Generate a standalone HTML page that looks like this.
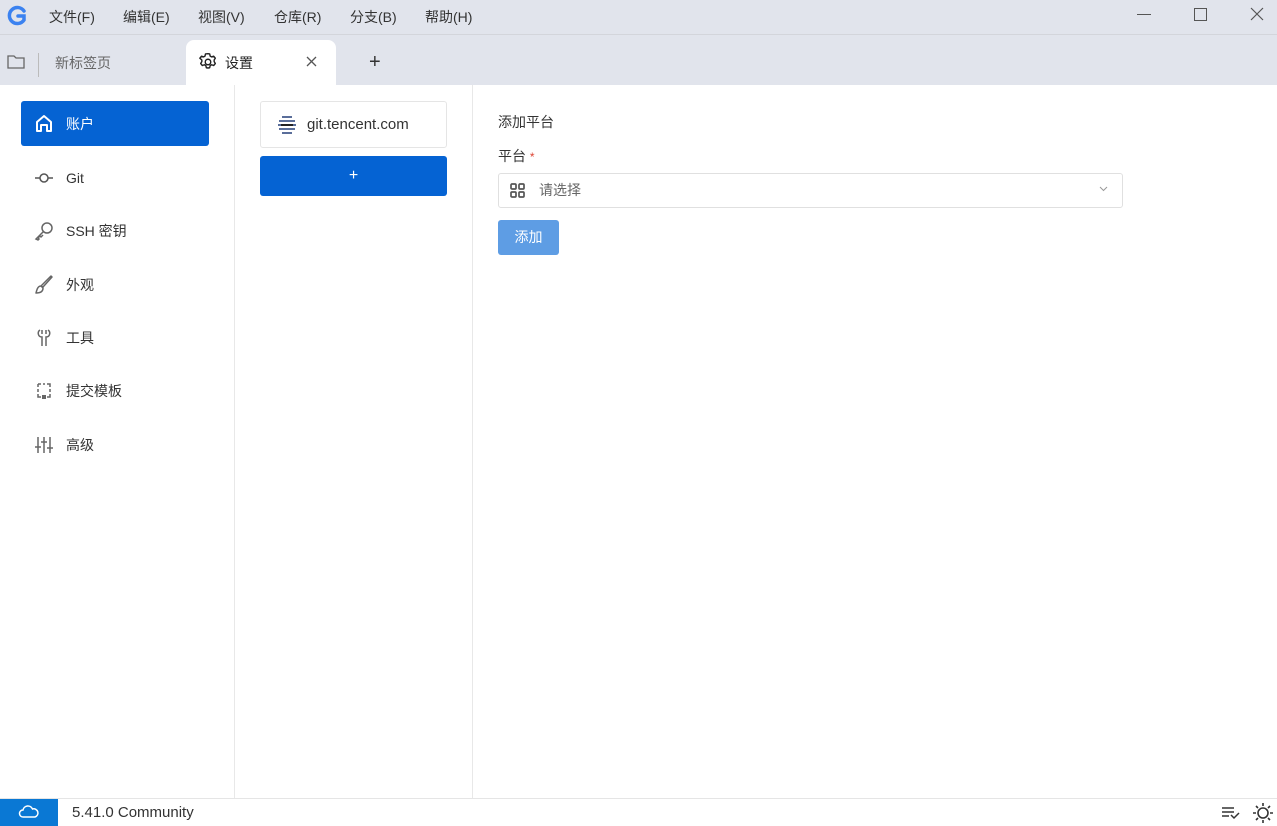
<!DOCTYPE html>
<html><head><meta charset="utf-8"><style>
*{box-sizing:border-box;margin:0;padding:0}
body{width:1277px;height:826px;overflow:hidden;background:#fff;font-family:"Liberation Sans","Noto Sans CJK SC",sans-serif;color:#333;position:relative;font-size:14px}
.abs{position:absolute}
#title{left:0;top:0;width:1277px;height:35px;background:#e1e4ec;border-bottom:1px solid #d3d5db}
.menu{top:7px;font-size:14px;color:#333}
#tabs{left:0;top:35px;width:1277px;height:50px;background:#e1e4ec}
#tab{left:186px;top:40px;width:150px;height:45px;background:#fff;border-radius:8px 8px 0 0}
.nav{left:21px;width:188px;height:45px;border-radius:3px;display:flex;align-items:center;padding-left:13px;font-size:14px;color:#333}
.nav svg{margin-right:12px}
.nav.act{background:#0563d3;color:#fff}
</style></head><body>
<div id="title" class="abs"></div>
<svg class="abs" style="left:6px;top:5px" width="22" height="22" viewBox="0 0 22 22"><path d="M18 6 A8 8 0 1 0 18 15 L18 11 L12 11" fill="none" stroke="#3b82f0" stroke-width="3.5" stroke-linecap="round"/></svg>
<div class="abs menu" style="left:49px">文件(F)</div>
<div class="abs menu" style="left:123px">编辑(E)</div>
<div class="abs menu" style="left:198px">视图(V)</div>
<div class="abs menu" style="left:274px">仓库(R)</div>
<div class="abs menu" style="left:350px">分支(B)</div>
<div class="abs menu" style="left:425px">帮助(H)</div>
<div class="abs" style="left:1137px;top:14px;width:14px;height:1px;background:#555"></div>
<div class="abs" style="left:1194px;top:8px;width:13px;height:13px;border:1px solid #555"></div>
<svg class="abs" style="left:1250px;top:7px" width="14" height="14"><path d="M1 1L13 13M13 1L1 13" stroke="#555" stroke-width="1.2"/></svg>
<div id="tabs" class="abs"></div>
<svg class="abs" style="left:7px;top:54px" width="18" height="16" viewBox="0 0 18 16"><path d="M1 2h6l2 2h8v10H1z" fill="none" stroke="#666" stroke-width="1.3"/></svg>
<div class="abs" style="left:38px;top:53px;width:1px;height:24px;background:#bbb"></div>
<div class="abs" style="left:55px;top:53px;color:#666">新标签页</div>
<div id="tab" class="abs"></div>
<svg class="abs" style="left:198px;top:52px" width="20" height="20" viewBox="0 0 24 24"><path d="M12 2l2 .3.6 2.6 1.7 1 2.5-.9 2 2.4-1.4 2.2v2l1.4 2.2-2 2.4-2.5-.9-1.7 1-.6 2.6-2 .3-2-.3-.6-2.6-1.7-1-2.5.9-2-2.4 1.4-2.2v-2L2.2 7.4l2-2.4 2.5.9 1.7-1L9 2.3z" fill="none" stroke="#222" stroke-width="1.7" stroke-linejoin="round"/><circle cx="12" cy="12" r="3.3" fill="none" stroke="#222" stroke-width="1.7"/></svg>
<div class="abs" style="left:225px;top:53px;color:#222">设置</div>
<svg class="abs" style="left:306px;top:56px" width="11" height="11"><path d="M1 1L10 10M10 1L1 10" stroke="#555" stroke-width="1.3"/></svg>
<div class="abs" style="left:369px;top:51px;font-size:20px;color:#333">+</div>
<div class="abs" style="left:234px;top:85px;width:1px;height:713px;background:#e8e8e8"></div>
<div class="abs" style="left:472px;top:85px;width:1px;height:713px;background:#e8e8e8"></div>
<div class="nav act abs" style="top:101px"><svg width="20" height="20" viewBox="0 0 20 20"><path d="M3 17V8l7-6 7 6v9h-4v-6H7v6z" fill="none" stroke="#fff" stroke-width="2" stroke-linejoin="round"/></svg>账户</div>
<div class="nav abs" style="top:155px"><svg width="20" height="20"><path d="M1 10h5M14 10h5" stroke="#555" stroke-width="1.5"/><circle cx="10" cy="10" r="4" fill="none" stroke="#555" stroke-width="1.5"/></svg>Git</div>
<div class="nav abs" style="top:208px"><svg width="20" height="20" viewBox="0 0 20 20"><circle cx="13" cy="7" r="5" fill="none" stroke="#666" stroke-width="1.5"/><path d="M9.5 10.5L2 18l2 1 1-1-1-1 2-2 1 1 2-2" fill="none" stroke="#666" stroke-width="1.5"/></svg>SSH 密钥</div>
<div class="nav abs" style="top:262px"><svg width="20" height="20" viewBox="0 0 20 20"><path d="M18 2L9 12l-2-1L17 1zM7 11c-3 0-4 3-5 7 4 0 7-1 7-5z" fill="none" stroke="#666" stroke-width="1.5" stroke-linejoin="round"/></svg>外观</div>
<div class="nav abs" style="top:315px"><svg width="20" height="20" viewBox="0 0 20 20"><path d="M6 2C3 4 4 9 8 9v9M14 2c3 2 2 7-2 7v9M8 2v4M12 2v4" fill="none" stroke="#666" stroke-width="1.5"/></svg>工具</div>
<div class="nav abs" style="top:368px"><svg width="20" height="20" viewBox="0 0 20 20"><path d="M4 3h3M9 3h2M13 3h3v3M16 8v3M16 13v3h-3M7 16H4v-3M4 11V8M4 6V3" fill="none" stroke="#666" stroke-width="1.5"/><path d="M8 14h4v4H8z" fill="#666"/></svg>提交模板</div>
<div class="nav abs" style="top:422px"><svg width="20" height="20" viewBox="0 0 20 20"><path d="M4 2v16M10 2v16M16 2v16M1 12h6M7 7h6M13 13h6" stroke="#666" stroke-width="1.5"/></svg>高级</div>
<div class="abs" style="left:260px;top:101px;width:187px;height:47px;border:1px solid #e5e5e5;border-radius:3px"></div>
<svg class="abs" style="left:276px;top:114px" width="22" height="22" viewBox="0 0 22 22"><path d="M6 3h10M3 7h16M2 11h18M3 15h16M6 19h10" stroke="#5a6e9a" stroke-width="2"/><path d="M5 11h12" stroke="#222" stroke-width="2"/></svg>
<div class="abs" style="left:307px;top:116px;font-size:15px;color:#333">git.tencent.com</div>
<div class="abs" style="left:260px;top:156px;width:187px;height:40px;background:#0563d3;border-radius:3px;color:#fff;text-align:center;line-height:40px;font-size:16px">+</div>
<div class="abs" style="left:498px;top:112px">添加平台</div>
<div class="abs" style="left:498px;top:146px">平台 <span style="color:#d43;font-size:12px">*</span></div>
<div class="abs" style="left:498px;top:173px;width:625px;height:35px;border:1px solid #e0e0e0;border-radius:3px"></div>
<svg class="abs" style="left:509px;top:182px" width="18" height="18"><g fill="none" stroke="#555" stroke-width="1.7"><rect x="2" y="2" width="5" height="5" rx="1"/><rect x="10" y="2" width="5" height="5" rx="1"/><rect x="2" y="10" width="5" height="5" rx="1"/><rect x="10" y="10" width="5" height="5" rx="1"/></g></svg>
<div class="abs" style="left:539px;top:180px;color:#666">请选择</div>
<svg class="abs" style="left:1099px;top:186px" width="9" height="6"><path d="M1 1l3.5 3.5L8 1" fill="none" stroke="#999"/></svg>
<div class="abs" style="left:498px;top:220px;width:61px;height:35px;background:#5e9de4;border-radius:3px;color:#fff;text-align:center;line-height:35px">添加</div>
<div class="abs" style="left:0;top:798px;width:1277px;height:1px;background:#e5e5e5"></div>
<div class="abs" style="left:0;top:799px;width:58px;height:27px;background:#0a78d4"></div>
<svg class="abs" style="left:18px;top:804px" width="22" height="16" viewBox="0 0 22 16"><path d="M5 13a3.5 3.5 0 0 1 0-7 5 5 0 0 1 9.5-1 4 4 0 0 1 2.5 8z" fill="none" stroke="#fff" stroke-width="1.5"/></svg>
<div class="abs" style="left:72px;top:804px;font-size:15px;color:#333">5.41.0 Community</div>
<svg class="abs" style="left:1221px;top:805px" width="20" height="16"><path d="M1 3h12M1 7h12M1 11h7M10 10l3 3 5-5" fill="none" stroke="#333" stroke-width="1.5"/></svg>
<svg class="abs" style="left:1252px;top:802px" width="22" height="22" viewBox="0 0 22 22"><circle cx="11" cy="11" r="5" fill="none" stroke="#333" stroke-width="1.6"/><path d="M11 1v3M11 18v3M1 11h3M18 11h3M4 4l2 2M16 16l2 2M4 18l2-2M16 6l2-2" stroke="#333" stroke-width="1.6"/></svg>
</body></html>
